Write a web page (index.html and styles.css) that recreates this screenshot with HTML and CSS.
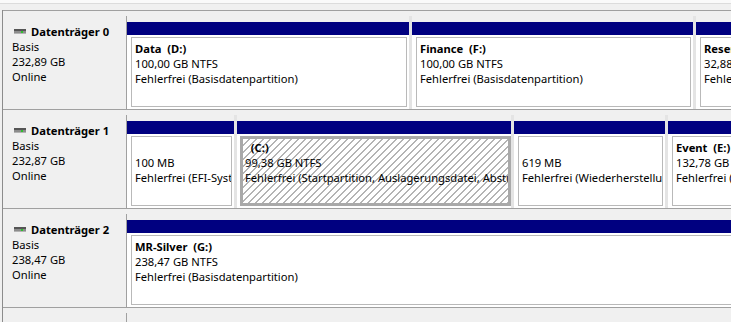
FILE: index.html
```html
<!DOCTYPE html>
<html lang="de">
<head>
    <meta charset="UTF-8">
    <meta name="viewport" content="width=device-width, initial-scale=1.0">
    <title>Datenträgerverwaltung</title>
    <link rel="stylesheet" href="styles.css">
</head>
<body>
    <div class="top"></div>

    <div class="disks">
        <!-- Datenträger 0 -->
        <div class="disk">
            <div class="label">
                <div class="disk-name">
                    <svg class="drive" width="12" height="5" viewBox="0 0 12 5"><rect x="0" y="0" width="12" height="5" fill="#8c8c8c"/><rect x="0" y="0" width="12" height="2" fill="#555"/><rect x="0" y="4" width="12" height="1" fill="#b4b4b4"/><rect x="7" y="2" width="2" height="2" fill="#2fc02f"/></svg>Datenträger 0
                </div>
                <div>Basis</div>
                <div>232,89 GB</div>
                <div>Online</div>
            </div>
            <div class="parts">
                <div class="part" style="width:282px">
                    <div class="bar"></div>
                    <div class="cell">
                        <div class="vol"><b>Data  (D:)</b>
100,00 GB NTFS
Fehlerfrei (Basisdatenpartition)</div>
                    </div>
                </div>
                <div class="part" style="width:284px">
                    <div class="bar"></div>
                    <div class="cell">
                        <div class="vol"><b>Finance  (F:)</b>
100,00 GB NTFS
Fehlerfrei (Basisdatenpartition)</div>
                    </div>
                </div>
                <div class="part" style="width:300px">
                    <div class="bar"></div>
                    <div class="cell">
                        <div class="vol"><b>Reserve  (R:)</b>
32,88 GB NTFS
Fehlerfrei (Basisdatenpartition)</div>
                    </div>
                </div>
            </div>
        </div>

        <!-- Datenträger 1 -->
        <div class="disk">
            <div class="label">
                <div class="disk-name">
                    <svg class="drive" width="12" height="5" viewBox="0 0 12 5"><rect x="0" y="0" width="12" height="5" fill="#8c8c8c"/><rect x="0" y="0" width="12" height="2" fill="#555"/><rect x="0" y="4" width="12" height="1" fill="#b4b4b4"/><rect x="7" y="2" width="2" height="2" fill="#2fc02f"/></svg>Datenträger 1
                </div>
                <div>Basis</div>
                <div>232,87 GB</div>
                <div>Online</div>
            </div>
            <div class="parts">
                <div class="part" style="width:107px">
                    <div class="bar"></div>
                    <div class="cell">
                        <div class="vol">
100 MB
Fehlerfrei (EFI-Systempartition)</div>
                    </div>
                </div>
                <div class="part" style="width:277px">
                    <div class="bar"></div>
                    <div class="cell cell-sel">
                        <div class="vol vol-sel"><b>  (C:)</b>
99,38 GB NTFS
Fehlerfrei (Startpartition, Auslagerungsdatei, Absturzabbild, Primäre Partition)</div>
                    </div>
                </div>
                <div class="part" style="width:154px">
                    <div class="bar"></div>
                    <div class="cell">
                        <div class="vol">
619 MB
Fehlerfrei (Wiederherstellungspartition)</div>
                    </div>
                </div>
                <div class="part" style="width:300px">
                    <div class="bar"></div>
                    <div class="cell">
                        <div class="vol"><b>Event  (E:)</b>
132,78 GB NTFS
Fehlerfrei (Basisdatenpartition)</div>
                    </div>
                </div>
            </div>
        </div>

        <!-- Datenträger 2 -->
        <div class="disk">
            <div class="label">
                <div class="disk-name">
                    <svg class="drive" width="12" height="5" viewBox="0 0 12 5"><rect x="0" y="0" width="12" height="5" fill="#8c8c8c"/><rect x="0" y="0" width="12" height="2" fill="#555"/><rect x="0" y="4" width="12" height="1" fill="#b4b4b4"/><rect x="7" y="2" width="2" height="2" fill="#2fc02f"/></svg>Datenträger 2
                </div>
                <div>Basis</div>
                <div>238,47 GB</div>
                <div>Online</div>
            </div>
            <div class="parts">
                <div class="part" style="width:700px">
                    <div class="bar"></div>
                    <div class="cell">
                        <div class="vol"><b>MR-Silver  (G:)</b>
238,47 GB NTFS
Fehlerfrei (Basisdatenpartition)</div>
                    </div>
                </div>
            </div>
        </div>

        <!-- next disk, scrolled off -->
        <div class="disk">
            <div class="label"></div>
        </div>
    </div>
</body>
</html>
```

FILE: styles.css
```css
body {
    margin: 0;
    font-family: "Noto Sans", "Segoe UI", sans-serif;
    font-size: 11.2px;
    line-height: 15px;
    color: #000;
    background-color: #f0f0f0;
    overflow: hidden;
}

.top {
    height: 10px;
    background: linear-gradient(#fafafa 0 3px, #dcdcdc 3px 4px, #f0f0f0 4px);
}

.disks {
    width: 900px;
    margin-left: 2px;
    border-left: 1px solid #8c8c8c;
}

.disk {
    display: flex;
    height: 99px;
    box-sizing: border-box;
    padding-top: 5px;
    border-top: 1px solid #a0a0a0;
}

.label {
    flex: none;
    width: 124px;
    box-sizing: border-box;
    padding: 8px 0 0 9px;
    border-right: 1px solid #a0a0a0;
}

.disk-name {
    display: flex;
    align-items: center;
    font-weight: bold;
}

.drive {
    margin: 0 5px 0 2px;
}

.parts {
    display: flex;
    flex: none;
}

.part {
    display: flex;
    flex-direction: column;
    flex: none;
    box-sizing: border-box;
}

    .part + .part {
        border-left: 3px solid #a0a0a0;
        border-image: linear-gradient(to right, #e4e4e4 0 1px, #a0a0a0 1px 2px, #e4e4e4 2px) 1;
    }

.bar {
    height: 13px;
    margin-top: 6px;
    background-color: #000080;
}

.cell {
    flex: 1;
    display: flex;
    min-width: 0;
    padding: 2px 2px 2px 4px;
    background-color: #fff;
}

.cell-sel {
    padding: 2px 0 2px 3px;
}

.vol {
    flex: 1;
    min-width: 0;
    padding: 3px 0 0 3px;
    border: 1px solid #b9b9b9;
    white-space: pre;
    overflow: hidden;
}

.vol-sel {
    padding: 1px 0 0 2px;
    border: 3px solid #a9a9a9;
    background: repeating-linear-gradient(135deg, #fff 0 4.2px, #b4b4b4 4.2px 4.95px);
}
```
